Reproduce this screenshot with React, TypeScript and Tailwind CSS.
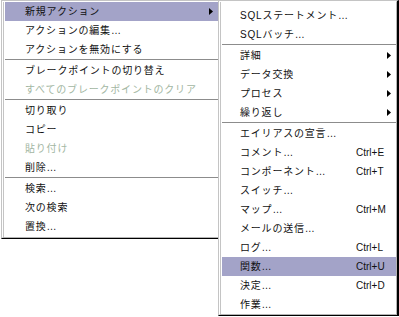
import React from 'react';

// Types
type Item =
    | { kind: 'sep' }
    | { kind: 'item'; label: string; shortcut?: string; submenu?: boolean; disabled?: boolean; active?: boolean };

const mainItems: Item[] = [
    { kind: 'item', label: '新規アクション', submenu: true, active: true },
    { kind: 'item', label: 'アクションの編集…' },
    { kind: 'item', label: 'アクションを無効にする' },
    { kind: 'sep' },
    { kind: 'item', label: 'ブレークポイントの切り替え' },
    { kind: 'item', label: 'すべてのブレークポイントのクリア', disabled: true },
    { kind: 'sep' },
    { kind: 'item', label: '切り取り' },
    { kind: 'item', label: 'コピー' },
    { kind: 'item', label: '貼り付け', disabled: true },
    { kind: 'item', label: '削除…' },
    { kind: 'sep' },
    { kind: 'item', label: '検索…' },
    { kind: 'item', label: '次の検索' },
    { kind: 'item', label: '置換…' },
];

const subItems: Item[] = [
    { kind: 'item', label: 'SQLステートメント…' },
    { kind: 'item', label: 'SQLバッチ…' },
    { kind: 'sep' },
    { kind: 'item', label: '詳細', submenu: true },
    { kind: 'item', label: 'データ交換', submenu: true },
    { kind: 'item', label: 'プロセス', submenu: true },
    { kind: 'item', label: '繰り返し', submenu: true },
    { kind: 'sep' },
    { kind: 'item', label: 'エイリアスの宣言…' },
    { kind: 'item', label: 'コメント…', shortcut: 'Ctrl+E' },
    { kind: 'item', label: 'コンポーネント…', shortcut: 'Ctrl+T' },
    { kind: 'item', label: 'スイッチ…' },
    { kind: 'item', label: 'マップ…', shortcut: 'Ctrl+M' },
    { kind: 'item', label: 'メールの送信…' },
    { kind: 'item', label: 'ログ…', shortcut: 'Ctrl+L' },
    { kind: 'item', label: '関数…', shortcut: 'Ctrl+U', active: true },
    { kind: 'item', label: '決定…', shortcut: 'Ctrl+D' },
    { kind: 'item', label: '作業…' },
];

function Arrow({ className }: { className: string }) {
    return (
        <svg width="4" height="7" viewBox="0 0 4 7" className={className}>
            <polygon points="0,0 4,3.5 0,7" fill="#000" />
        </svg>
    );
}

function MenuList({ items, labelWidth, indent, arrowMargin }: { items: Item[]; labelWidth: string; indent: string; arrowMargin: string }) {
    return (
        <>
            {items.map((item, i) =>
                item.kind === 'sep' ? (
                    <div key={i} className="h-[2px] border-t border-[#8c8c8c]" />
                ) : (
                    <div
                        key={i}
                        className={`flex items-center h-[19px] ${indent} ${item.active ? 'bg-[#a3a3c8]' : ''} ${item.disabled ? 'text-[#a2b6a2]' : 'text-[#111]'}`}
                    >
                        <span className={`${labelWidth} whitespace-nowrap leading-none tracking-[0.8px]`}>{item.label}</span>
                        {item.shortcut && <span className="text-[10px] leading-none">{item.shortcut}</span>}
                        {item.submenu && <Arrow className={`ml-auto ${arrowMargin}`} />}
                    </div>
                )
            )}
        </>
    );
}

export default function App() {
    return (
        <div
            className="relative w-[399px] h-[317px] bg-white overflow-hidden flex items-start text-[10px]"
            style={{ fontFamily: '"Liberation Sans", "Noto Sans CJK JP", sans-serif' }}
        >
            {/* Main context menu */}
            <div className="ml-px w-[219px] border border-t-[#c4c4c4] border-l-[#c4c4c4] border-b-black border-r-black">
                <div className="border border-t-white border-l-white border-b-[#b4b4b4] border-r-[#b4b4b4]">
                    <div className="border-l border-[#c4c4c4] pl-px pb-px">
                        <MenuList items={mainItems} labelWidth="w-auto" indent="pl-[20px]" arrowMargin="mr-[5px]" />
                    </div>
                </div>
            </div>

            {/* Sub menu */}
            <div className="relative z-10 -ml-[2px] w-[181px] border border-t-[#c4c4c4] border-l-[#c4c4c4] border-b-black border-r-black border-r-2">
                <div className="border border-t-white border-l-white border-b-[#b4b4b4] border-r-[#b4b4b4]">
                    <div className="border-l border-[#c4c4c4] pt-[4px] pl-px">
                        <MenuList items={subItems} labelWidth="w-[116px]" indent="pl-[18px]" arrowMargin="mr-[5px]" />
                    </div>
                </div>
            </div>
        </div>
    );
}
